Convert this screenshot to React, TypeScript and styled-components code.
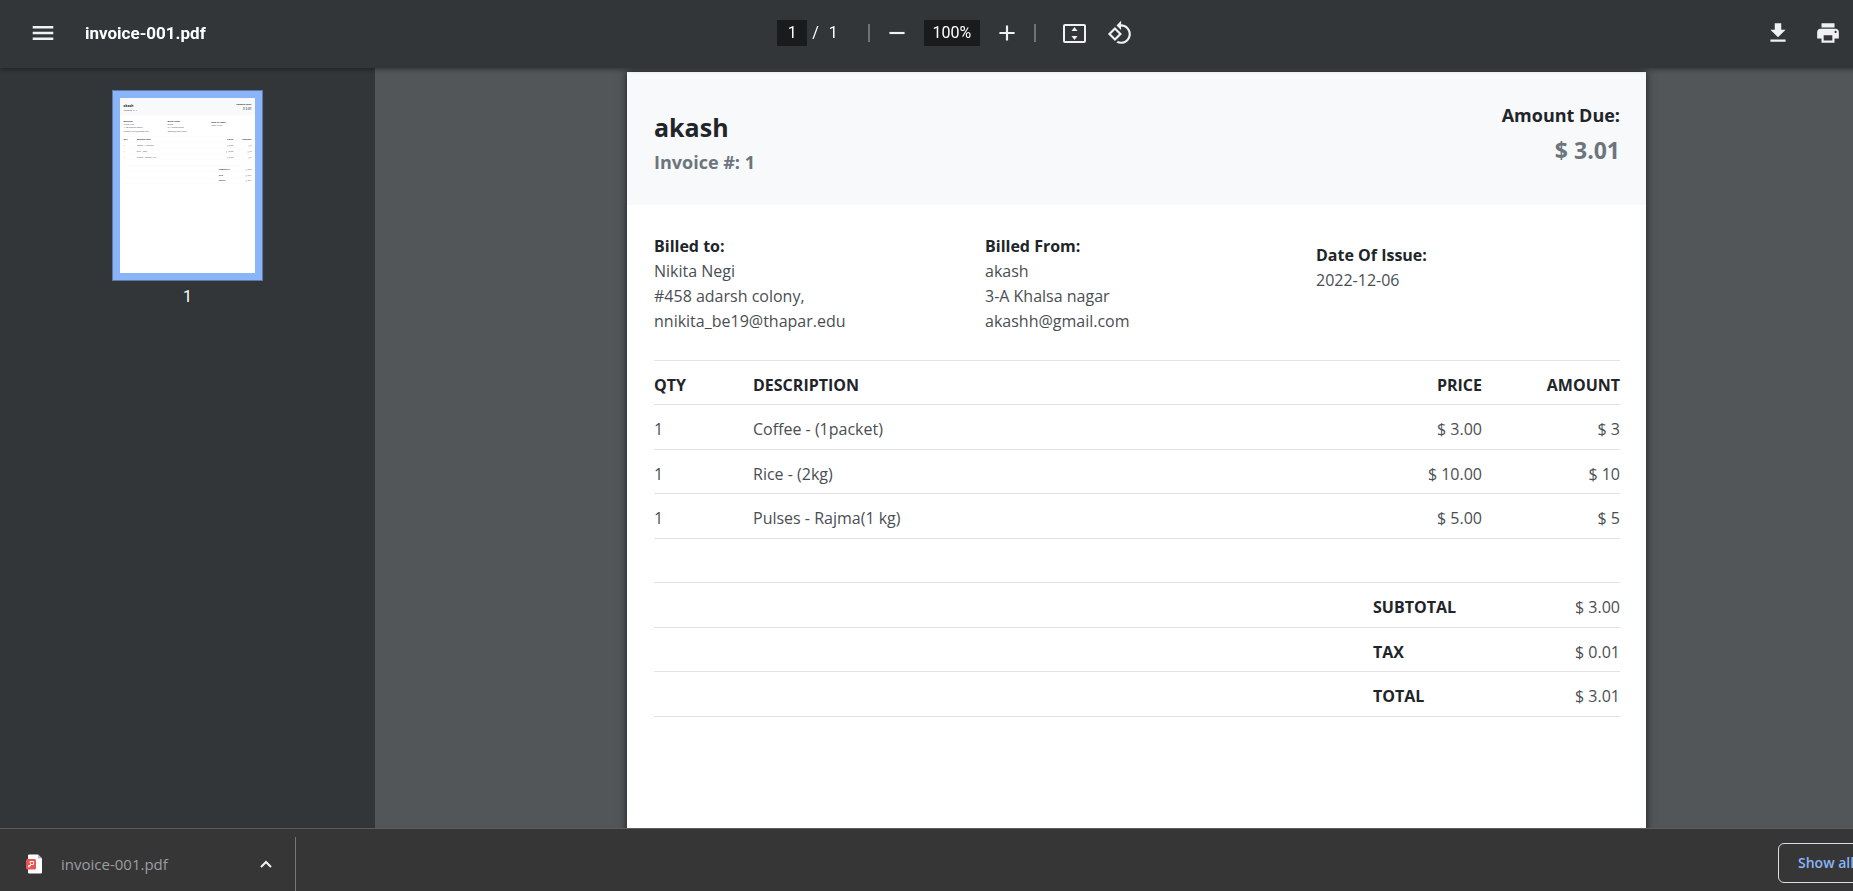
import React from "react";
import styled, { createGlobalStyle } from "styled-components";

const GlobalStyle = createGlobalStyle`
  * { box-sizing: border-box; }
  html, body { margin: 0; height: 100%; overflow: hidden; background: #525659; }
  #root { height: 100%; }
  button, input { font: inherit; color: inherit; margin: 0; }
`;

const uiFont = `Roboto, "Liberation Sans", sans-serif`;
const docFont = `"Segoe UI", "Open Sans", "Noto Sans", sans-serif`;

/* The window is slightly wider than the visible area; its right edge runs off screen. */
const Shell = styled.div`
  display: flex;
  flex-direction: column;
  width: calc(100% + 45px);
  height: 100vh;
  font-family: ${uiFont};
  font-size: 16px;
  color: #fff;
`;

const Toolbar = styled.header`
  position: relative;
  z-index: 1;
  display: grid;
  grid-template-columns: 1fr auto 1fr;
  align-items: center;
  flex: none;
  height: 68px;
  padding-bottom: 2px;
  background: #323639;
  box-shadow: 0 1px 5px rgba(0, 0, 0, 0.45);
`;

const ToolbarStart = styled.div`
  display: flex;
  align-items: center;
  gap: 23px;
  padding-left: 24px;
`;

const ToolbarCenter = styled.div`
  display: flex;
  align-items: center;
  gap: 8px;
  padding-left: 18px;
`;

const ToolbarEnd = styled.div`
  display: flex;
  align-items: center;
  justify-content: flex-end;
  gap: 12px;
  padding-right: 51px;
`;

const FileTitle = styled.h1`
  margin: 0;
  font-size: 17px;
  font-weight: 700;
  line-height: 20px;
`;

const IconButton = styled.button`
  display: flex;
  align-items: center;
  justify-content: center;
  width: 38px;
  height: 38px;
  padding: 0;
  border: 0;
  border-radius: 50%;
  background: none;
  color: #f1f1f1;
`;

const ToolGroup = styled.div`
  display: flex;
  gap: 7px;
  padding-left: 12px;
`;

const PageSelector = styled.div`
  display: flex;
  align-items: center;
  gap: 10px;
  height: 26px;
  padding-right: 22px;
  line-height: 26px;
`;

const PageLabel = styled.label`
  display: flex;
  gap: 5px;
`;

const ToolbarInput = styled.input<{ $width: number }>`
  width: ${(p) => p.$width}px;
  height: 26px;
  padding: 0;
  border: 0;
  background: #191b1c;
  text-align: center;
  line-height: 26px;
`;

const Separator = styled.span`
  width: 2px;
  height: 18px;
  background: #707375;
`;

const Body = styled.div`
  display: flex;
  flex: 1 1 0;
  min-height: 0;
`;

const Sidebar = styled.nav`
  display: flex;
  flex: none;
  flex-direction: column;
  align-items: center;
  gap: 6px;
  width: 375px;
  padding-top: 22px;
  background: #323639;
`;

const ThumbButton = styled.button`
  width: 151px;
  height: 191px;
  padding: 7px;
  border: 1px solid #5f7aa6;
  background: #8ab4f8;
`;

const ThumbClip = styled.span`
  display: block;
  width: 135px;
  height: 175px;
  overflow: hidden;
  background: #fff;
`;

const ThumbScale = styled.span`
  display: block;
  width: 1019px;
  transform: scale(0.1325);
  transform-origin: 0 0;
  text-align: left;
`;

const ThumbNumber = styled.span`
  line-height: 20px;
`;

const Viewer = styled.main`
  flex: 1 1 0;
  min-width: 0;
  padding-top: 4px;
  overflow: auto;
  scrollbar-width: none;
  background: #525659;
`;

const Sheet = styled.article`
  width: 1019px;
  min-height: 1320px;
  margin: 0 auto;
  background: #fff;
  color: #212529;
  font-family: ${docFont};
  font-size: 16px;
  line-height: 25px;
  box-shadow: 0 0 8px rgba(0, 0, 0, 0.65);
`;

const InvoiceHead = styled.header`
  display: flex;
  justify-content: space-between;
  height: 133px;
  padding: 30px 26px 0 27px;
  background: #f8f9fb;
`;

const Heading = styled.h2`
  margin: 7px 0 0;
  font-size: 25px;
  font-weight: 700;
  line-height: 36px;
`;

const SubHeading = styled.p`
  margin: 4px 0 0;
  color: #6c757d;
  font-size: 18px;
  font-weight: 700;
  line-height: 26px;
`;

const Due = styled.div`
  text-align: right;
`;

const DueLabel = styled.p`
  margin: 0;
  font-size: 18px;
  font-weight: 700;
  line-height: 26px;
`;

const DueValue = styled.p`
  margin: 4px 0 0;
  color: #6c757d;
  font-size: 23px;
  font-weight: 700;
  line-height: 36px;
`;

const Parties = styled.section`
  display: grid;
  grid-template-columns: repeat(3, 1fr);
  align-items: start;
  gap: 27px;
  padding: 29px 26px 0 27px;
`;

const Party = styled.div<{ $lowered?: boolean }>`
  padding-top: ${(p) => (p.$lowered ? 9 : 0)}px;
  color: #4a4e53;

  strong,
  span {
    display: block;
  }

  strong {
    color: #212529;
  }
`;

const TableWrap = styled.div`
  padding: 26px 26px 0 27px;
`;

const Items = styled.table`
  width: 100%;
  table-layout: fixed;
  border-collapse: separate;
  border-spacing: 0;
  border-top: 1px solid #e0e2e5;
  font-size: 16px;
  line-height: 24px;
`;

const Col = styled.col<{ $width?: number }>`
  width: ${(p) => (p.$width ? `${p.$width}px` : "auto")};
`;

const HeadRow = styled.tr`
  height: 44px;
`;

const Row = styled.tr`
  height: 44px;

  &:nth-child(odd) {
    height: 45px;
  }
`;

const cell = `
  padding: 4px 10px 0;
  border-bottom: 1px solid #e0e2e5;
  vertical-align: middle;

  &:first-child { padding-left: 0; }
  &:last-child { padding-right: 0; }
`;

const HeadCell = styled.th<{ $end?: boolean }>`
  ${cell}
  text-align: ${(p) => (p.$end ? "right" : "left")};
`;

const Cell = styled.td<{ $end?: boolean }>`
  ${cell}
  color: #4a4e53;
  text-align: ${(p) => (p.$end ? "right" : "left")};
`;

const DownloadBar = styled.footer`
  display: flex;
  align-items: center;
  flex: none;
  height: 63px;
  padding: 5px 18px 0 0;
  border-top: 1px solid #5c5c5c;
  background: #363636;
  font-family: ${docFont};
`;

const DownloadItem = styled.div`
  display: flex;
  align-self: flex-end;
  align-items: center;
  width: 296px;
  height: 54px;
  padding: 0 12px 0 26px;
  border-right: 1px solid #757575;
`;

const DownloadLink = styled.a`
  display: flex;
  flex: 1;
  align-items: center;
  gap: 19px;
  color: #9a9da1;
  font-size: 15px;
  line-height: 20px;
  text-decoration: none;
`;

const CaretButton = styled(IconButton)`
  width: 34px;
  height: 34px;
`;

const ShowAll = styled.button`
  width: 102px;
  height: 40px;
  margin-left: auto;
  padding: 0 0 0 19px;
  border: 1px solid #dadce0;
  border-radius: 6px;
  background: none;
  color: #8ab4f8;
  font-size: 14px;
  font-weight: 600;
  text-align: left;
  white-space: nowrap;
`;

type IconProps = { d: string; size?: number };

const Icon = ({ d, size = 26 }: IconProps) => (
  <svg width={size} height={size} viewBox="0 0 24 24" fill="currentColor" aria-hidden="true">
    <path d={d} />
  </svg>
);

const icons = {
  menu: "M2.500 18.500h19v-2.300h-19v2.300zm0-5.400h19v-2.200h-19v2.200zm0-7.600v2.300h19V5.500h-19z",
  minus: "M5 11h14v2H5z",
  plus: "M19 13h-6v6h-2v-6H5v-2h6V5h2v6h6z",
  rotate:
    "M7.34 6.41L.86 12.9l6.49 6.48 6.49-6.48-6.5-6.49zM3.69 12.9l3.66-3.66L11 12.9l-3.66 3.66-3.65-3.66zm15.67-6.26C17.61 4.88 15.3 4 13 4V.76L8.76 5 13 9.24V6c1.79 0 3.58.68 4.95 2.05 2.73 2.73 2.73 7.17 0 9.9C16.58 19.32 14.79 20 13 20c-.97 0-1.94-.21-2.84-.61l-1.49 1.49C10.02 21.62 11.51 22 13 22c2.3 0 4.61-.88 6.36-2.64 3.52-3.51 3.52-9.21 0-12.72z",
  download: "M19 9h-4V3H9v6H5l7 7 7-7zM5 18v2h14v-2H5z",
  print:
    "M19 8H5c-1.66 0-3 1.34-3 3v6h4v4h12v-4h4v-6c0-1.66-1.34-3-3-3zm-3 11H8v-5h8v5zm3-7c-.55 0-1-.45-1-1s.45-1 1-1 1 .45 1 1-.45 1-1 1zm-1-9H6v4h12V3z",
};

const FitIcon = () => (
  <svg width="23" height="19" viewBox="0 0 23 19" aria-hidden="true">
    <rect x="1" y="1" width="21" height="17" rx="1" fill="none" stroke="currentColor" strokeWidth="2" />
    <path d="M11.5 3l3 4h-6zM11.5 16l3-4h-6z" fill="currentColor" />
  </svg>
);

const PdfIcon = () => (
  <svg width="16" height="20" viewBox="0 0 16 20" aria-hidden="true">
    <path d="M2 1.500a1 1 0 0 1 1-1h9l4 4v14a1 1 0 0 1-1 1H3a1 1 0 0 1-1-1z" fill="#fff" />
    <path d="M12 .5l4 4h-4z" fill="#b9bcc0" />
    <rect x="0" y="5" width="10" height="10.500" rx="1.500" fill="#ea5455" />
    <path
      d="M4 7.500h3.500v3H4.500zM4.500 10.500c0 1.500-.5 2.500-2 2.500v-1.500h2"
      fill="none"
      stroke="#fff"
      strokeWidth="0.900"
    />
  </svg>
);

const CaretIcon = () => (
  <svg width="12" height="8" viewBox="0 0 12 8" aria-hidden="true">
    <path d="M1 7l5-5 5 5" fill="none" stroke="currentColor" strokeWidth="2" />
  </svg>
);

const items = [
  { qty: "1", name: "Coffee - (1packet)", price: "$ 3.00", amount: "$ 3" },
  { qty: "1", name: "Rice - (2kg)", price: "$ 10.00", amount: "$ 10" },
  { qty: "1", name: "Pulses - Rajma(1 kg)", price: "$ 5.00", amount: "$ 5" },
];

const totals = [
  { label: "SUBTOTAL", value: "$ 3.00" },
  { label: "TAX", value: "$ 0.01" },
  { label: "TOTAL", value: "$ 3.01" },
];

const Invoice = () => (
  <Sheet>
    <InvoiceHead>
      <div>
        <Heading>akash</Heading>
        <SubHeading>Invoice #: 1</SubHeading>
      </div>
      <Due>
        <DueLabel>Amount Due:</DueLabel>
        <DueValue>$ 3.01</DueValue>
      </Due>
    </InvoiceHead>
    <Parties>
      <Party>
        <strong>Billed to:</strong>
        <span>Nikita Negi</span>
        <span>#458 adarsh colony,</span>
        <span>nnikita_be19@thapar.edu</span>
      </Party>
      <Party>
        <strong>Billed From:</strong>
        <span>akash</span>
        <span>3-A Khalsa nagar</span>
        <span>akashh@gmail.com</span>
      </Party>
      <Party $lowered>
        <strong>Date Of Issue:</strong>
        <span>2022-12-06</span>
      </Party>
    </Parties>
    <TableWrap>
      <Items>
        <colgroup>
          <Col $width={89} />
          <Col />
          <Col $width={129} />
          <Col $width={128} />
        </colgroup>
        <thead>
          <HeadRow>
            <HeadCell scope="col">QTY</HeadCell>
            <HeadCell scope="col">DESCRIPTION</HeadCell>
            <HeadCell scope="col" $end>PRICE</HeadCell>
            <HeadCell scope="col" $end>AMOUNT</HeadCell>
          </HeadRow>
        </thead>
        <tbody>
          {items.map((item) => (
            <Row key={item.name}>
              <Cell>{item.qty}</Cell>
              <Cell>{item.name}</Cell>
              <Cell $end>{item.price}</Cell>
              <Cell $end>{item.amount}</Cell>
            </Row>
          ))}
          <Row>
            <Cell colSpan={4} />
          </Row>
          {totals.map((total) => (
            <Row key={total.label}>
              <Cell colSpan={2} />
              <HeadCell scope="row">{total.label}</HeadCell>
              <Cell $end>{total.value}</Cell>
            </Row>
          ))}
        </tbody>
      </Items>
    </TableWrap>
  </Sheet>
);

export default function App() {
  return (
    <>
      <GlobalStyle />
      <Shell>
        <Toolbar>
          <ToolbarStart>
            <IconButton aria-label="Menu"><Icon d={icons.menu} /></IconButton>
            <FileTitle>invoice-001.pdf</FileTitle>
          </ToolbarStart>
          <ToolbarCenter>
            <PageSelector>
              <PageLabel>
                <ToolbarInput $width={30} aria-label="Page number" defaultValue="1" />
                <span>/</span>
              </PageLabel>
              <span>1</span>
            </PageSelector>
            <Separator />
            <IconButton aria-label="Zoom out"><Icon d={icons.minus} /></IconButton>
            <ToolbarInput $width={56} aria-label="Zoom level" defaultValue="100%" />
            <IconButton aria-label="Zoom in"><Icon d={icons.plus} /></IconButton>
            <Separator />
            <ToolGroup>
              <IconButton aria-label="Fit to page"><FitIcon /></IconButton>
              <IconButton aria-label="Rotate counterclockwise"><Icon d={icons.rotate} /></IconButton>
            </ToolGroup>
          </ToolbarCenter>
          <ToolbarEnd>
            <IconButton aria-label="Download"><Icon d={icons.download} /></IconButton>
            <IconButton aria-label="Print"><Icon d={icons.print} /></IconButton>
          </ToolbarEnd>
        </Toolbar>
        <Body>
          <Sidebar aria-label="Pages">
            <ThumbButton aria-label="Page 1">
              <ThumbClip>
                <ThumbScale aria-hidden="true"><Invoice /></ThumbScale>
              </ThumbClip>
            </ThumbButton>
            <ThumbNumber>1</ThumbNumber>
          </Sidebar>
          <Viewer><Invoice /></Viewer>
        </Body>
        <DownloadBar>
          <DownloadItem>
            <DownloadLink href="#invoice-001.pdf">
              <PdfIcon />
              invoice-001.pdf
            </DownloadLink>
            <CaretButton aria-label="More options"><CaretIcon /></CaretButton>
          </DownloadItem>
          <ShowAll>Show all</ShowAll>
        </DownloadBar>
      </Shell>
    </>
  );
}
